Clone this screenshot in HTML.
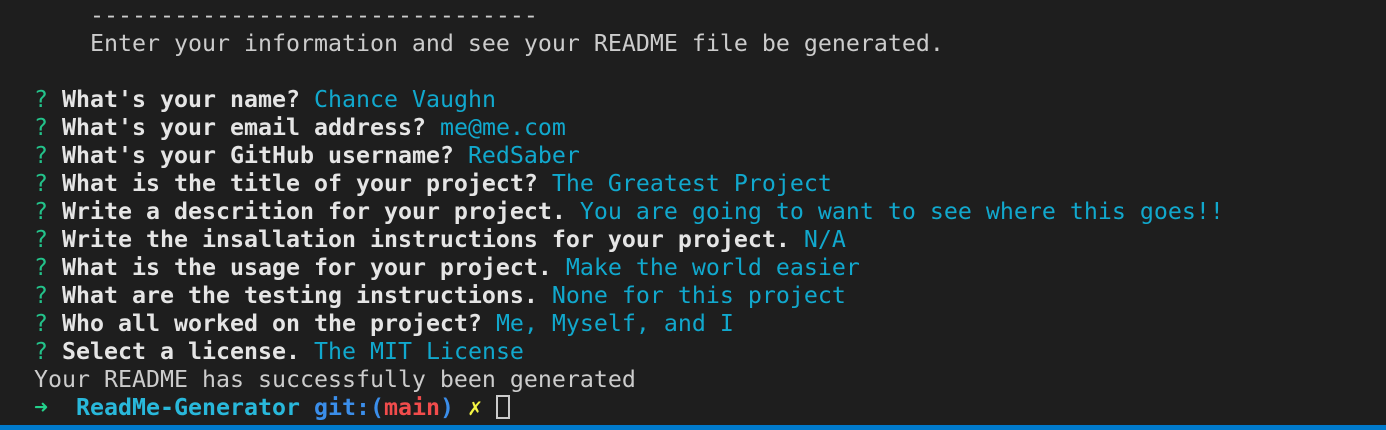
<!DOCTYPE html>
<html><head><style>
html,body{margin:0;padding:0;width:1386px;height:430px;background:#1e1e1e;overflow:hidden}
pre{margin:0;position:absolute;left:34px;top:2px;font-family:"DejaVu Sans Mono","Liberation Mono",monospace;font-size:23.25px;line-height:28px;color:#cccccc}
.g{color:#23c28a}.b{font-weight:bold;color:#e5e5e5}.c{color:#11a8cd}
.bar{position:absolute;left:0;bottom:0;width:1386px;height:5px;background:#007acc}
.cur{display:inline-block;height:24px;border:2px solid #cccccc;vertical-align:-4px;box-sizing:border-box;width:14px}
</style></head><body>
<pre>    --------------------------------
    Enter your information and see your README file be generated.

<span class="g">?</span> <span class="b">What's your name?</span> <span class="c">Chance Vaughn</span>
<span class="g">?</span> <span class="b">What's your email address?</span> <span class="c">me@me.com</span>
<span class="g">?</span> <span class="b">What's your GitHub username?</span> <span class="c">RedSaber</span>
<span class="g">?</span> <span class="b">What is the title of your project?</span> <span class="c">The Greatest Project</span>
<span class="g">?</span> <span class="b">Write a descrition for your project.</span> <span class="c">You are going to want to see where this goes!!</span>
<span class="g">?</span> <span class="b">Write the insallation instructions for your project.</span> <span class="c">N/A</span>
<span class="g">?</span> <span class="b">What is the usage for your project.</span> <span class="c">Make the world easier</span>
<span class="g">?</span> <span class="b">What are the testing instructions.</span> <span class="c">None for this project</span>
<span class="g">?</span> <span class="b">Who all worked on the project?</span> <span class="c">Me, Myself, and I</span>
<span class="g">?</span> <span class="b">Select a license.</span> <span class="c">The MIT License</span>
Your README has successfully been generated
<span style="color:#23d18b;font-weight:bold">➜</span>  <b style="color:#29b8db">ReadMe-Generator</b> <b style="color:#3b8eea">git:(</b><b style="color:#f14c4c">main</b><b style="color:#3b8eea">)</b> <b style="color:#f5f543">✗</b> <span class="cur"></span></pre>
<div class="bar"></div>
</body></html>
